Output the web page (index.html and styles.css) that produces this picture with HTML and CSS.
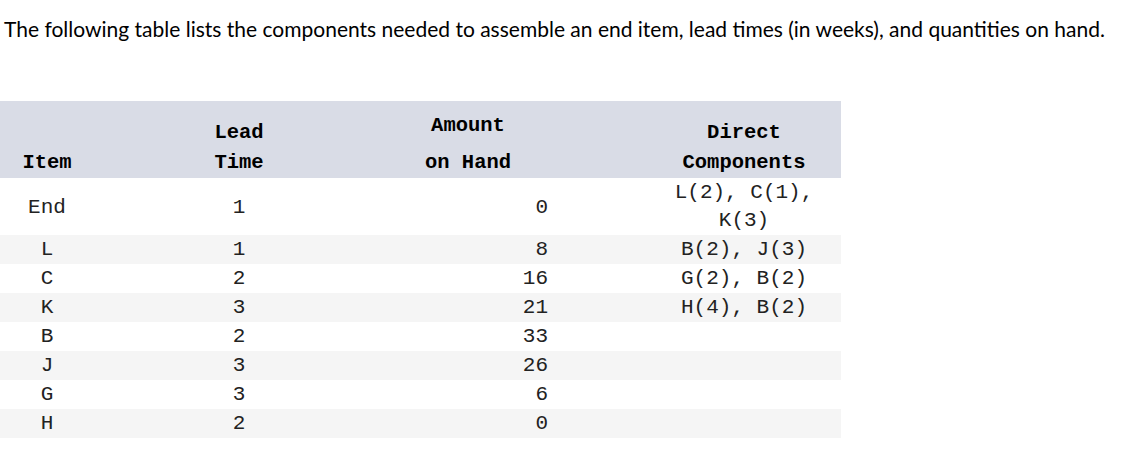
FILE: index.html
```html
<!DOCTYPE html>
<html>
<head>
<meta charset="utf-8">
<link rel="stylesheet" href="styles.css">
</head>
<body>
<p class="intro">The following table lists the components needed to assemble an end item, lead times (in weeks), and quantities on hand.</p>
<table class="bom">
  <thead>
    <tr>
      <th class="c-item">Item</th>
      <th class="c-lead">Lead<br>Time</th>
      <th class="c-amt"><span class="amt-top">Amount</span><br>on Hand</th>
      <th class="c-comp">Direct<br>Components</th>
    </tr>
  </thead>
  <tbody>
    <tr class="first"><td class="c-item">End</td><td class="c-lead">1</td><td class="c-amt">0</td><td class="c-comp">L(2), C(1),<br>K(3)</td></tr>
    <tr class="alt"><td class="c-item">L</td><td class="c-lead">1</td><td class="c-amt">8</td><td class="c-comp">B(2), J(3)</td></tr>
    <tr><td class="c-item">C</td><td class="c-lead">2</td><td class="c-amt">16</td><td class="c-comp">G(2), B(2)</td></tr>
    <tr class="alt"><td class="c-item">K</td><td class="c-lead">3</td><td class="c-amt">21</td><td class="c-comp">H(4), B(2)</td></tr>
    <tr><td class="c-item">B</td><td class="c-lead">2</td><td class="c-amt">33</td><td class="c-comp"></td></tr>
    <tr class="alt"><td class="c-item">J</td><td class="c-lead">3</td><td class="c-amt">26</td><td class="c-comp"></td></tr>
    <tr><td class="c-item">G</td><td class="c-lead">3</td><td class="c-amt">6</td><td class="c-comp"></td></tr>
    <tr class="alt"><td class="c-item">H</td><td class="c-lead">2</td><td class="c-amt">0</td><td class="c-comp"></td></tr>
  </tbody>
</table>
</body>
</html>
```
FILE: styles.css
```css
html, body {
  margin: 0;
  padding: 0;
  background: #ffffff;
}
.intro {
  margin: 0;
  padding: 17px 0 0 4px;
  height: 83px;
  box-sizing: border-box;
  font-family: Lato, "Open Sans", sans-serif;
  font-size: 21px;
  line-height: 24px;
  color: #000000;
}
.bom {
  border-collapse: collapse;
  border-spacing: 0;
  width: 841px;
  margin-top: 18px;
  font-family: "Liberation Mono", "Courier New", monospace;
  table-layout: fixed;
}
.bom th, .bom td {
  padding: 0;
}
.bom thead th {
  background: #d9dce6;
  height: 77px;
  vertical-align: bottom;
  font-size: 20.5px;
  font-weight: bold;
  line-height: 30px;
  color: #000;
  text-align: center;
}
.bom thead th .amt-top {
  display: inline-block;
  line-height: 30px;
  transform: translateY(-7px);
}
.bom td {
  font-size: 21px;
  line-height: 28px;
  height: 29px;
  color: #222;
  vertical-align: middle;
  text-align: center;
}
.bom tr.first td {
  height: 54px;
  padding-top: 3px;
}
.bom tr.first td.c-comp {
  height: 57px;
  padding-top: 0;
}
.bom tr.alt td {
  background: #f5f5f5;
}
.c-item { width: 94px; }
.c-lead { width: 290px; }
.bom td.c-amt {
  text-align: right;
  padding-right: 4px;
}
.c-amt { width: 168px; box-sizing: border-box; }
.c-comp { width: 289px; }
.bom .c-comp {
  padding-left: 95px;
  box-sizing: border-box;
}
```
